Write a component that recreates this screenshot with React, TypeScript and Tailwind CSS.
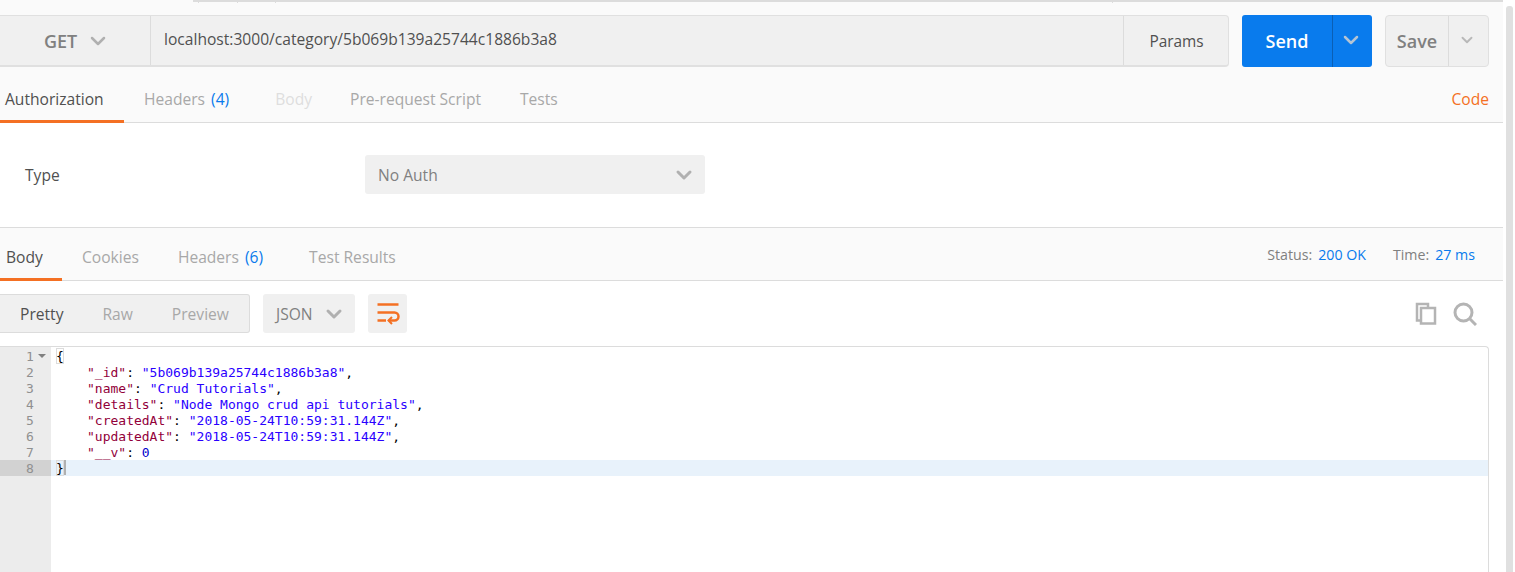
import { ChevronDown } from "lucide-react";

const openSans = "font-['Open_Sans',sans-serif]";

const jsonLines = [
  { no: 1, indent: false, key: "", value: "", raw: "{" },
  { no: 2, indent: true, key: '"_id"', value: '"5b069b139a25744c1886b3a8"', raw: "," },
  { no: 3, indent: true, key: '"name"', value: '"Crud Tutorials"', raw: "," },
  { no: 4, indent: true, key: '"details"', value: '"Node Mongo crud api tutorials"', raw: "," },
  { no: 5, indent: true, key: '"createdAt"', value: '"2018-05-24T10:59:31.144Z"', raw: "," },
  { no: 6, indent: true, key: '"updatedAt"', value: '"2018-05-24T10:59:31.144Z"', raw: "," },
  { no: 7, indent: true, key: '"__v"', value: "0", raw: "" },
  { no: 8, indent: false, key: "", value: "", raw: "}" },
];

const Chevron = ({ className, strokeWidth = 3 }: { className: string; strokeWidth?: number }) => (
  <ChevronDown className={className} strokeWidth={strokeWidth} />
);

const App = () => {
  return (
    <div className={`${openSans} w-[1515px] h-[572px] overflow-hidden bg-white flex`}>
      <div className="w-[1503px] flex flex-col shrink-0">
        {/* Request bar */}
        <div className="h-[123px] bg-[#fafafa] border-b border-[#dcdcdc] flex flex-col">
          {/* clipped tab strip at the very top */}
          <div className="h-[3px] ml-[193px] flex border-t-2 border-[#dcdcdc]">
            <div className="w-[6px] border-r border-[#dcdcdc]" />
            <div className="w-[39px] border-r border-[#dcdcdc]" />
            <div className="w-[38px] border-r border-[#dcdcdc]" />
            <div className="w-[837px] border-r border-[#dcdcdc]" />
          </div>
          <div className="h-[64px] pt-[12px] flex">
            <div className="w-[1229px] h-[52px] flex bg-[#f0f0f0] border-y border-[#e0e0e0] border-b-2 border-r rounded-r-[4px]">
              <div className="w-[151px] border-r border-[#dcdcdc] flex items-center pl-[44px] gap-[9px]">
                <span className="text-[18px] font-semibold text-[#808080] pt-[2px]">GET</span>
                <Chevron className="w-[24px] h-[24px] text-[#b0b0b0]" strokeWidth={2.5} />
              </div>
              <div className="flex-1 flex items-center pl-[13px] text-[15.6px] text-[#505050] pb-[1px]">
                localhost:3000/category/5b069b139a25744c1886b3a8
              </div>
              <div className="w-[105px] border-l border-[#dcdcdc] flex items-center justify-center text-[15.4px] text-[#505050] pl-[1px] pt-[2px]">
                Params
              </div>
            </div>
            <div className="ml-[13px] w-[130px] h-[52px] flex bg-[#097bed] rounded-[3px]">
              <div className="w-[90px] flex items-center justify-center text-[18px] font-semibold text-white">Send</div>
              <div className="flex-1 border-l border-[#0a5fb5] flex items-center justify-center pr-[3px] pb-[2px]">
                <Chevron className="w-[24px] h-[24px] text-[#b4c4d4]" strokeWidth={2.5} />
              </div>
            </div>
            <div className="ml-[13px] w-[104px] h-[52px] flex bg-[#f0f0f0] border border-[#e0e0e0] rounded-[4px]">
              <div className="w-[63px] border-r border-[#dcdcdc] flex items-center justify-center text-[18px] font-semibold text-[#808080]">
                Save
              </div>
              <div className="flex-1 flex items-center justify-center pr-[3px] pb-[2px]">
                <Chevron className="w-[18px] h-[18px] text-[#b8b8b8]" strokeWidth={2.5} />
              </div>
            </div>
          </div>
          <div className="flex-1 flex items-stretch text-[15.6px] text-[#a8a8a8] pr-[14px]">
            <div className="w-[124px] pl-[5px] pt-[21px] border-b-[3px] border-[#f47023] text-[#505050] -mb-px whitespace-nowrap">Authorization</div>
            <div className="ml-[20px] pt-[21px]">
              Headers <span className="ml-[2px] text-[#097bed]">(4)</span>
            </div>
            <div className="ml-[46px] pt-[21px] text-[#dedede]">Body</div>
            <div className="ml-[38px] pt-[21px]">Pre-request Script</div>
            <div className="ml-[39px] pt-[21px]">Tests</div>
            <div className="ml-auto pt-[21px] text-[#f47023]">Code</div>
          </div>
        </div>

        {/* Auth section */}
        <div className="h-[105px] bg-white border-b border-[#dcdcdc] flex items-start pl-[25px] pt-[32px] text-[15.6px]">
          <div className="w-[340px] pt-[9px] text-[#505050]">Type</div>
          <div className="w-[340px] h-[39px] bg-[#f0f0f0] rounded-[3px] flex items-center justify-between pl-[13px] pr-[9px] text-[#808080]">
            <span className="pt-[2px]">No Auth</span>
            <Chevron className="w-[24px] h-[24px] text-[#b0b0b0]" />
          </div>
        </div>

        {/* Response tabs */}
        <div className="h-[53px] bg-[#fafafa] border-b border-[#dcdcdc] flex text-[15.6px] text-[#a8a8a8] pr-[28px]">
          <div className="w-[62px] pl-[6px] pt-[18px] border-b-[3px] border-[#f47023] text-[#505050] -mb-px">Body</div>
          <div className="ml-[20px] pt-[18px]">Cookies</div>
          <div className="ml-[39px] pt-[18px]">
            Headers <span className="ml-[2px] text-[#097bed]">(6)</span>
          </div>
          <div className="ml-[46px] pt-[18px]">Test Results</div>
          <div className="ml-auto pt-[16px] text-[14.2px] flex">
            <span className="text-[#808080]">Status:</span>
            <span className="ml-[6px] text-[#097bed]">200 OK</span>
            <span className="ml-[27px] text-[#808080]">Time:</span>
            <span className="ml-[6px] text-[#097bed]">27 ms</span>
          </div>
        </div>

        {/* Response toolbar */}
        <div className="h-[65px] flex items-start pt-[13px] text-[15.6px] pr-[26px]">
          <div className="w-[250px] h-[39px] bg-[#f0f0f0] border border-[#dcdcdc] border-l-0 rounded-r-[3px] flex items-center text-[#a8a8a8]">
            <span className="ml-[20px] pt-[2px] text-[#505050]">Pretty</span>
            <span className="ml-[39px] pt-[2px]">Raw</span>
            <span className="ml-[39px] pt-[2px]">Preview</span>
          </div>
          <div className="ml-[13px] w-[92px] h-[39px] bg-[#f0f0f0] rounded-[3px] flex items-center justify-between pl-[13px] pr-[9px] text-[#808080]">
            <span className="pt-[2px]">JSON</span>
            <Chevron className="w-[24px] h-[24px] text-[#b0b0b0]" />
          </div>
          <div className="ml-[13px] w-[39px] h-[39px] bg-[#f0f0f0] rounded-[3px] flex items-center justify-center">
            <svg width="24" height="24" viewBox="0 0 24 24" fill="none" stroke="#f47023" strokeWidth="2.5">
              <path d="M1.5 2.5h21" />
              <path d="M1.5 10.5h17a3.9 3.9 0 0 1 0 8h-6" />
              <path d="M1.5 18.5h8.5" />
              <path d="M16 15l-3.5 3.5 3.5 3.5" strokeWidth="2" />
            </svg>
          </div>
          <div className="ml-auto pt-[8px] flex gap-[16px]">
            <svg width="24" height="24" viewBox="0 0 24 24" fill="none" stroke="#b4b4b4" strokeWidth="2.5">
              <path d="M8 18.5H4V2H15V6" />
              <rect x="8" y="6" width="14" height="15.5" />
            </svg>
            <svg width="24" height="24" viewBox="0 0 24 24" fill="none" stroke="#b4b4b4" strokeWidth="3">
              <circle cx="10.5" cy="10.5" r="8.5" />
              <path d="M16.5 16.5L23 23" />
            </svg>
          </div>
        </div>

        {/* Code viewer */}
        <div className="flex-1 bg-white border-t border-r border-[#dcdcdc] rounded-tr-[4px] mr-[14px] flex font-['DejaVu_Sans_Mono',monospace] text-[13px] leading-[18px]">
          <div className="w-[51px] shrink-0 bg-[#ececec] pt-[1px] text-[#909090]">
            {jsonLines.map((line) => (
              <div key={line.no} className={`h-[16px] flex pl-[26px] ${line.no === 8 ? "bg-[#d2d2d2]" : ""}`}>
                <span>{line.no}</span>
                {line.no === 1 && <span className="ml-[4px] mt-[6px] w-0 h-0 border-x-[4px] border-t-[4px] border-x-transparent border-t-[#808080]" />}
              </div>
            ))}
          </div>
          <div className="flex-1 pt-[1px]">
            {jsonLines.map((line) => (
              <div
                key={line.no}
                className={`h-[16px] whitespace-pre ${line.no === 8 ? "bg-[#e8f2fb]" : ""} ${line.indent ? "pl-[36px]" : "pl-[5px]"}`}
              >
                {line.key && <span className="text-[#92003a]">{line.key}</span>}
                {line.key && <span className="text-black">: </span>}
                {line.value && (
                  <span className={line.key === '"__v"' ? "text-[#0000cd]" : "text-[#2a00ff]"}>{line.value}</span>
                )}
                <span className={`text-black ${line.no === 1 || line.no === 8 ? "inline-block h-[16px] shadow-[inset_0_0_0_1px_#dcdcdc]" : ""}`}>{line.raw}</span>
                {line.no === 8 && <span className="inline-block w-[2px] h-[15px] align-top bg-[#b0b0b0]" />}
              </div>
            ))}
          </div>
        </div>
      </div>

      {/* Scrollbar track */}
      <div className="w-[7px] ml-[3px] mt-[6px] bg-[#e0e0e0] rounded-t-[3px] shrink-0" />
    </div>
  );
};

export default App;
